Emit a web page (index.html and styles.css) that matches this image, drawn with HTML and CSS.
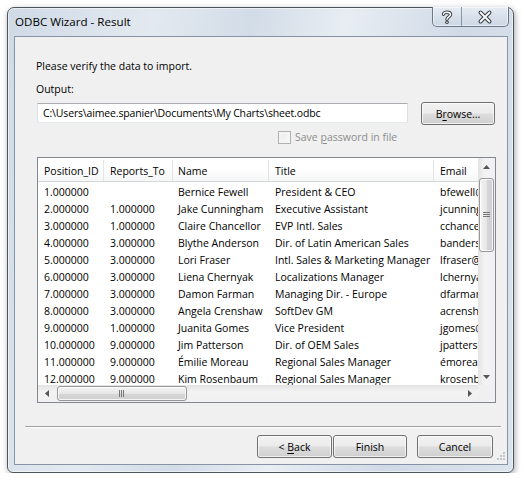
FILE: index.html
```html
<!DOCTYPE html>
<html lang="en">
<head>
    <meta charset="UTF-8">
    <title>ODBC Wizard - Result</title>
    <link rel="stylesheet" href="styles.css">
</head>
<body>
    <div class="window">
        <div class="titlebar">
            <span class="title">ODBC Wizard - Result</span>
            <div class="caption-buttons">
                <div class="cap-btn help">
                    <svg width="28" height="18" viewBox="0 0 28 18">
                        <path d="M10.5 6.2C10.5 3.6 17.5 3.4 17.5 6.6C17.5 8.8 14 9 14 11.2" fill="none" stroke="#3a3f46" stroke-width="3.4" stroke-linecap="round"/>
                        <circle cx="14" cy="14.3" r="1.8" fill="#3a3f46"/>
                        <path d="M10.5 6.2C10.5 3.6 17.5 3.4 17.5 6.6C17.5 8.8 14 9 14 11.2" fill="none" stroke="#fff" stroke-width="1.4" stroke-linecap="round"/>
                        <circle cx="14" cy="14.3" r="0.8" fill="#fff"/>
                    </svg>
                </div>
                <div class="cap-btn close">
                    <svg width="46" height="18" viewBox="0 0 46 18">
                        <path d="M18.5 4.5L27.5 13.5M27.5 4.5L18.5 13.5" stroke="#3a3f46" stroke-width="4" stroke-linecap="round"/>
                        <path d="M18.5 4.5L27.5 13.5M27.5 4.5L18.5 13.5" stroke="#fff" stroke-width="1.8" stroke-linecap="round"/>
                    </svg>
                </div>
            </div>
        </div>

        <div class="client">
            <p class="intro">Please verify the data to import.</p>
            <div class="field-label">Output:</div>
            <div class="output-row">
                <div class="textbox">C:\Users\aimee.spanier\Documents\My Charts\sheet.odbc</div>
                <button class="btn browse">B<u>r</u>owse...</button>
            </div>
            <div class="checkbox-row">
                <span class="checkbox"></span>
                <span class="checkbox-label">Save <u>p</u>assword in file</span>
            </div>

            <div class="listview">
                <div class="list-data">
                    <div class="row head">
                        <div class="cell">Position_ID</div>
                        <div class="cell">Reports_To</div>
                        <div class="cell name">Name</div>
                        <div class="cell">Title</div>
                        <div class="cell">Email</div>
                    </div>
                    <div class="rows">
                        <div class="row"><div class="cell">1.000000</div><div class="cell"></div><div class="cell name">Bernice Fewell</div><div class="cell">President &amp; CEO</div><div class="cell">bfewell@</div></div>
                        <div class="row"><div class="cell">2.000000</div><div class="cell">1.000000</div><div class="cell name">Jake Cunningham</div><div class="cell">Executive Assistant</div><div class="cell">jcunningham@</div></div>
                        <div class="row"><div class="cell">3.000000</div><div class="cell">1.000000</div><div class="cell name">Claire Chancellor</div><div class="cell">EVP Intl. Sales</div><div class="cell">cchancellor@</div></div>
                        <div class="row"><div class="cell">4.000000</div><div class="cell">3.000000</div><div class="cell name">Blythe Anderson</div><div class="cell">Dir. of Latin American Sales</div><div class="cell">banderson@</div></div>
                        <div class="row"><div class="cell">5.000000</div><div class="cell">3.000000</div><div class="cell name">Lori Fraser</div><div class="cell">Intl. Sales &amp; Marketing Manager</div><div class="cell">lfraser@</div></div>
                        <div class="row"><div class="cell">6.000000</div><div class="cell">3.000000</div><div class="cell name">Liena Chernyak</div><div class="cell">Localizations Manager</div><div class="cell">lchernyak@</div></div>
                        <div class="row"><div class="cell">7.000000</div><div class="cell">3.000000</div><div class="cell name">Damon Farman</div><div class="cell">Managing Dir. - Europe</div><div class="cell">dfarman@</div></div>
                        <div class="row"><div class="cell">8.000000</div><div class="cell">3.000000</div><div class="cell name">Angela Crenshaw</div><div class="cell">SoftDev GM</div><div class="cell">acrenshaw@</div></div>
                        <div class="row"><div class="cell">9.000000</div><div class="cell">1.000000</div><div class="cell name">Juanita Gomes</div><div class="cell">Vice President</div><div class="cell">jgomes@</div></div>
                        <div class="row"><div class="cell">10.000000</div><div class="cell">9.000000</div><div class="cell name">Jim Patterson</div><div class="cell">Dir. of OEM Sales</div><div class="cell">jpatterson@</div></div>
                        <div class="row"><div class="cell">11.000000</div><div class="cell">9.000000</div><div class="cell name">Émilie Moreau</div><div class="cell">Regional Sales Manager</div><div class="cell">émoreau@</div></div>
                        <div class="row"><div class="cell">12.000000</div><div class="cell">9.000000</div><div class="cell name">Kim Rosenbaum</div><div class="cell">Regional Sales Manager</div><div class="cell">krosenbaum@</div></div>
                    </div>
                </div>

                <div class="vscroll">
                    <div class="arrow"><svg width="7" height="4" viewBox="0 0 7 4"><path d="M0 4L3.5 0L7 4Z" fill="#555"/></svg></div>
                    <div class="thumb v-thumb">
                        <svg width="7" height="6" viewBox="0 0 7 6"><path d="M0 .5H7M0 2.5H7M0 4.5H7" stroke="#777" stroke-width="1"/></svg>
                    </div>
                    <div class="track-fill"></div>
                    <div class="arrow"><svg width="7" height="4" viewBox="0 0 7 4"><path d="M0 0L3.5 4L7 0Z" fill="#555"/></svg></div>
                </div>
                <div class="hscroll">
                    <div class="arrow"><svg width="4" height="7" viewBox="0 0 4 7"><path d="M4 0L0 3.5L4 7Z" fill="#555"/></svg></div>
                    <div class="thumb h-thumb">
                        <svg width="6" height="7" viewBox="0 0 6 7"><path d="M.5 0V7M2.5 0V7M4.5 0V7" stroke="#777" stroke-width="1"/></svg>
                    </div>
                    <div class="track-fill"></div>
                    <div class="arrow"><svg width="4" height="7" viewBox="0 0 4 7"><path d="M0 0L4 3.5L0 7Z" fill="#555"/></svg></div>
                </div>
                <div class="corner"></div>
            </div>

            <div class="separator"></div>

            <div class="footer">
                <button class="btn back">&lt; <u>B</u>ack</button>
                <button class="btn finish">Finish</button>
                <button class="btn cancel">Cancel</button>
            </div>

            <svg class="grip" width="10" height="10" viewBox="0 0 10 10">
                <rect x="8" y="0" width="2" height="2" fill="#c3c6ca"/>
                <rect x="5" y="3" width="2" height="2" fill="#c3c6ca"/>
                <rect x="8" y="3" width="2" height="2" fill="#c3c6ca"/>
                <rect x="2" y="6" width="2" height="2" fill="#c3c6ca"/>
                <rect x="5" y="6" width="2" height="2" fill="#c3c6ca"/>
                <rect x="8" y="6" width="2" height="2" fill="#c3c6ca"/>
            </svg>
        </div>
    </div>
</body>
</html>
```

FILE: styles.css
```css
* {
    margin: 0;
    padding: 0;
    box-sizing: border-box;
}

body {
    font-family: 'Open Sans', 'Liberation Sans', sans-serif;
    font-size: 10.5px;
    color: #000;
    background-color: #fff;
}

.window {
    margin: 7px 0 0 7px;
    width: 507px;
    height: 466px;
    border: 1px solid #4d555e;
    border-radius: 7px 7px 6px 6px;
    background: linear-gradient(100deg, #cfdae6 0%, #e3e9f0 25%, #d2dce7 42%, #e8edf3 58%, #d0dae6 78%, #dbe3ec 100%);
    box-shadow: 1px 2px 6px rgba(0,0,0,0.35), inset 0 0 0 1px rgba(255,255,255,0.55);
    display: flex;
    flex-direction: column;
}

.titlebar {
    height: 28px;
    display: flex;
    justify-content: space-between;
    align-items: flex-start;
}

.title {
    font-size: 11.6px;
    line-height: 16px;
    margin: 6px 0 0 7px;
}

.caption-buttons {
    display: flex;
    margin-top: -1px;
    margin-right: 4px;
    height: 20px;
    border: 1px solid #6b7888;
    border-top: none;
    border-radius: 0 0 5px 5px;
    background: linear-gradient(#e6ecf3, #d7e0ea 55%, #cdd8e4);
    box-shadow: inset 0 0 0 1px rgba(255,255,255,0.5);
}

.cap-btn {
    display: flex;
    align-items: center;
    justify-content: center;
}

.cap-btn.help {
    width: 29px;
    border-right: 1px solid #8a96a6;
}

.cap-btn.close {
    width: 46px;
}

.client {
    position: relative;
    margin-left: 6px;
    width: 494px;
    height: 429px;
    border: 1px solid #8794a5;
    background: #f0f0f0;
}

.intro {
    margin: 21px 0 0 21px;
    line-height: 16px;
}

.field-label {
    margin: 7px 0 0 21px;
    line-height: 16px;
}

.output-row {
    display: flex;
    margin: 5px 0 0 22px;
    height: 23px;
}

.textbox {
    width: 371px;
    height: 20px;
    margin-top: 1px;
    padding-left: 5px;
    line-height: 18px;
    letter-spacing: -0.15px;
    background: #fff;
    border: 1px solid #abadb3;
    border-color: #abadb3 #dbdfe6 #e3e9ef #e2e3ea;
    white-space: nowrap;
    overflow: hidden;
}

.btn {
    font-family: inherit;
    font-size: 10.5px;
    color: #000;
    height: 23px;
    width: 75px;
    border: 1px solid #707070;
    border-radius: 3px;
    background: linear-gradient(#f2f2f2 0%, #ebebeb 48%, #dddddd 52%, #cfcfcf 100%);
    box-shadow: inset 0 0 0 1px rgba(255,255,255,0.7);
}

.btn u {
    text-decoration-thickness: 1px;
    text-underline-offset: 2px;
}

.browse {
    margin-left: 13px;
    width: 74px;
}

.checkbox-row {
    display: flex;
    align-items: center;
    height: 16px;
    margin: 4px 0 0 263px;
}

.checkbox {
    width: 13px;
    height: 13px;
    border: 1px solid #b1b1b1;
    background: linear-gradient(135deg, #e9e9e9, #fafafa);
    box-shadow: inset 0 0 0 2px #f4f4f4;
    margin-right: 4px;
}

.checkbox-label {
    color: #8d8d8d;
}

.checkbox-label u {
    text-underline-offset: 2px;
}

.listview {
    margin: 12px 0 0 22px;
    width: 459px;
    height: 246px;
    border: 1px solid #828790;
    background: #fff;
    display: grid;
    grid-template-columns: 1fr 17px;
    grid-template-rows: 1fr 17px;
}

.list-data {
    overflow: hidden;
}

.row {
    display: grid;
    grid-template-columns: 66px 69px 96px 165px 60px;
    height: 17px;
    line-height: 17px;
    white-space: nowrap;
}

.row.head {
    height: 24px;
    line-height: 22px;
    padding-top: 2px;
    border-bottom: 1px solid #d5d5d5;
    background: linear-gradient(#ffffff 0%, #ffffff 45%, #f5f6f7 100%);
}

.head .cell {
    border-right: 1px solid #e5e5e5;
}

.cell {
    padding-left: 6px;
    overflow: hidden;
}

.cell.name {
    padding-left: 5px;
}

.rows {
    padding-top: 2px;
}

.vscroll,
.hscroll {
    display: flex;
    background: linear-gradient(90deg, #e3e3e3, #f3f3f3 40%, #f0f0f0 100%);
}

.vscroll {
    flex-direction: column;
}

.hscroll {
    background: linear-gradient(#e3e3e3, #f3f3f3 40%, #f0f0f0 100%);
}

.corner {
    background: #f0f0f0;
}

.arrow {
    width: 17px;
    height: 17px;
    flex: none;
    display: flex;
    align-items: center;
    justify-content: center;
}

.track-fill {
    flex: 1;
}

.thumb {
    display: flex;
    align-items: center;
    justify-content: center;
    border: 1px solid #979797;
    border-radius: 3px;
    box-shadow: inset 0 0 0 1px rgba(255,255,255,0.8);
}

.v-thumb {
    height: 74px;
    margin: 3px 1px 0 1px;
    background: linear-gradient(90deg, #f4f4f4, #e6e6e6 50%, #d6d6d6 51%, #d0d0d0);
}

.h-thumb {
    width: 130px;
    margin: 1px 0 1px 2px;
    background: linear-gradient(#f4f4f4, #e6e6e6 50%, #d6d6d6 51%, #d0d0d0);
}

.separator {
    margin: 23px 6px 0 10px;
    height: 2px;
    border-top: 1px solid #a0a0a0;
    border-bottom: 1px solid #fff;
}

.footer {
    display: flex;
    justify-content: flex-end;
    margin-top: 7px;
    padding-right: 14px;
}

.finish {
    margin-left: 1px;
    width: 74px;
}

.cancel {
    margin-left: 10px;
    width: 76px;
}

.grip {
    position: absolute;
    right: 2px;
    bottom: 2px;
}
```
